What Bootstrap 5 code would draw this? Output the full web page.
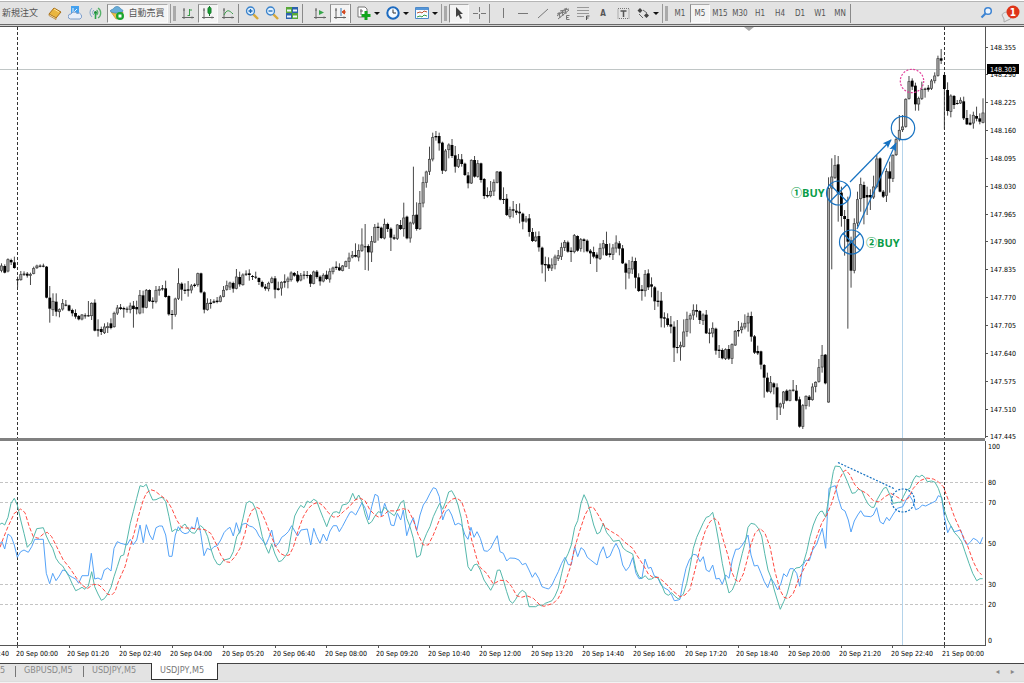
<!DOCTYPE html>
<html lang="ja">
<head>
<meta charset="utf-8">
<meta name="viewport" content="width=device-width, initial-scale=1">
<title>USDJPY,M5</title>
<link href="https://cdn.jsdelivr.net/npm/bootstrap@5.3.0/dist/css/bootstrap.min.css" rel="stylesheet">
<style>
:root{--ui:"DejaVu Sans Condensed","Noto Sans CJK JP",sans-serif}
body{font-family:var(--ui);font-size:8px;background:#fff;color:#333;line-height:1}
.toolbar{background:#e3e3e3;border-top:1px solid #b5b5b5;height:23px;margin-top:1px}
.toolbar-edge{height:3px;background:#d4d4d4;border-top:1px solid #6a6a6a;border-bottom:1px solid #555}
.tool{flex:none;width:20px;height:19px;padding:0;border:0;background:none;color:#555;font-size:8px;display:flex;align-items:center;justify-content:center}
.tool svg{width:14px;height:14px;flex:none}
.tool.active{background:#f4f4f4;border:1px solid #fafafa;border-left-color:#8c8c8c;border-top-color:#aaa}
.tool-order{width:45px;font-size:9px;justify-content:flex-start;padding-left:2px}
.tool-auto{width:61px;font-size:9px;margin:0 2px 0 2px;gap:4px}
.tool-menu{width:29px;gap:3px}
.tool-menu::after{content:"";border:3px solid transparent;border-top-color:#111;border-bottom:0}
.tool .bubble{width:20px;height:20px}
.period{padding-top:2px}
.rule-v{flex:none;width:4px;height:19px;border-left:1px solid #8a8a8a}
.grip{flex:none;width:8px;height:19px;border-left:1px solid #999}
.grip::after{content:"";display:block;width:3px;height:15px;margin:2px 0 0 2px;background:#aaa}
.chart{display:block;width:100%;height:auto;background:#fff}
.chart text{font-family:var(--ui);font-size:7px;fill:#000}
.chart .price-now{fill:#fff}
.chart .note{font-family:"Open Sans","Noto Sans CJK JP",sans-serif;font-weight:700;font-size:11px;fill:#0a9d48}
.chart .ring{font-family:"Noto Sans CJK JP",sans-serif;font-weight:700;font-size:11px}
.sheetbar{background:#e3e3e3;border-top:1px solid #444;height:18px}
.sheetbar .nav-link{font-size:9px;line-height:11px;color:#8a8a8a;padding:1px 0 4px 8px;height:15px;min-width:67px}
.sheetbar .bar-mark{width:1px;height:11px;background:#777;margin-top:2px}
.sheetbar .nav-link.active{background:#fff;border:1px solid #333;border-top:0;color:#777;margin-top:-1px;height:17px;padding-top:2px}
.sheetbar .nav-link.first-tab{padding-left:0;min-width:15px}
.scroller{border:0;background:none;color:#888;font-size:8px;padding:0;width:15px;height:15px}
.statusbar{background:#f3f3f3;border-top:1px solid #ddd;height:2px}
</style>
</head>
<body>
<header>
<div class="toolbar d-flex align-items-center overflow-hidden" role="toolbar">
  <button class="tool tool-order">新規注文</button>
  <button class="tool" aria-label="履歴"><svg viewBox="0 0 14 14"><path d="M1 8 6 2l7 4-5 6z" fill="#e9b640" stroke="#a86f18"/><path d="m1 8 7 4v1.500L1 9.500z" fill="#fff3c8" stroke="#a86f18" stroke-width=".7"/><path d="m6 3 5 3" stroke="#ffe597"/></svg></button>
  <button class="tool" aria-label="クラウド"><svg viewBox="0 0 14 14"><rect x="3" y="0" width="8" height="8" fill="#43a0ee"/><path d="M5 2v5l4-4" stroke="#e8f5ff" fill="none"/><path d="M2.500 13a2.500 2.500 0 0 1 .5-5 3.500 3.500 0 0 1 6-.500A3 3 0 0 1 12 13z" fill="#e8eff9" stroke="#7d9cc8"/></svg></button>
  <button class="tool" aria-label="シグナル"><svg viewBox="0 0 14 14" fill="none"><path d="M4 2a6 6 0 0 0 0 9M6 4a3 3 0 0 0 0 5" stroke="#86a7c9"/><path d="M10 2a6 6 0 0 1 0 10M8.500 4a3 3 0 0 1 0 5" stroke="#55b169" stroke-width="1.300"/><circle cx="7.500" cy="6.500" r="1.500" fill="#198b35"/><path d="M7.500 7v6" stroke="#2ba34a" stroke-width="1.600"/></svg></button>
  <button class="tool tool-auto active"><svg viewBox="0 0 14 14"><path d="m1 6 6 2 6-2-2 6-5 1z" fill="#edc04a" stroke="#b98a20" stroke-width=".6"/><path d="M0 5c1-2 3-1 4-3s5-2 6 0 3 1 3 3-11 3-13 0z" fill="#69add8" stroke="#3b7fb0" stroke-width=".6"/><circle cx="10" cy="10" r="4" fill="#19a52e"/><path d="M8.500 8.500h3v3h-3z" fill="#fff"/></svg>自動売買</button>
  <span class="grip"></span>
  <button class="tool" aria-label="バーチャート"><svg viewBox="0 0 14 14" fill="none" stroke="#666"><path d="M3 2v11M1 11.500h12M2 4h2M11 10.500v2"/><path d="M8.500 3v7M8.500 4H11M6.500 9.500h2" stroke="#3c9c4a"/></svg></button>
  <button class="tool active" aria-label="ローソク足"><svg viewBox="0 0 14 14" fill="none" stroke="#666"><path d="M3 2v11M1 11.500h12M2 4h2M11 10.500v2"/><path d="M8.500 0v10" stroke="#14782a"/><rect x="7" y="1.500" width="3" height="6" rx="1" fill="#16a332" stroke="#14782a"/></svg></button>
  <button class="tool" aria-label="ラインチャート"><svg viewBox="0 0 14 14" fill="none" stroke="#666"><path d="M3 2v11M1 11.500h12M2 4h2M11 10.500v2"/><path d="M3 9c3-6 5-5 9-1" stroke="#3c9c4a"/></svg></button>
  <span class="rule-v"></span>
  <button class="tool" aria-label="拡大"><svg viewBox="0 0 14 14"><path d="m8 8 5 5" stroke="#d7a93a" stroke-width="2.400"/><circle cx="5.500" cy="5" r="4" fill="#dff0ff" stroke="#3b83cb" stroke-width="1.300"/><path d="M3.500 5h4M5.500 3v4" stroke="#226cb7" stroke-width="1.300"/></svg></button>
  <button class="tool" aria-label="縮小"><svg viewBox="0 0 14 14"><path d="m8 8 5 5" stroke="#d7a93a" stroke-width="2.400"/><circle cx="5.500" cy="5" r="4" fill="#dff0ff" stroke="#3b83cb" stroke-width="1.300"/><path d="M3.500 5h4" stroke="#226cb7" stroke-width="1.300"/></svg></button>
  <button class="tool" aria-label="整列"><svg viewBox="0 0 14 14"><path d="M1 1h6v6H1zM7 7h6v6H7z" fill="#58a839"/><path d="M7 1h6v6H7zM1 7h6v6H1z" fill="#2c62ad"/><path d="M2 3.500h4v2H2zM8 3.500h4v2H8zM2 9.500h4v2H2zM8 9.500h4v2H8z" fill="#edf5ff"/></svg></button>
  <span class="rule-v me-1"></span>
  <button class="tool" aria-label="自動スクロール"><svg viewBox="0 0 14 14" fill="none" stroke="#666"><path d="M3 2v11M1 11.500h12M2 4h2M11 10.500v2"/><path d="m6 4 5 2.500L6 9z" fill="#36a64b" stroke="none"/></svg></button>
  <button class="tool active" aria-label="チャートシフト"><svg viewBox="0 0 14 14" fill="none" stroke="#666"><path d="M3 2v11M1 11.500h12M2 4h2M11 10.500v2"/><path d="M8 2v8" stroke="#3878b0"/><path d="M13 6h-3m1.500-2-2.500 2 2.500 2z" stroke="#d34a22" fill="#d34a22"/></svg></button>
  <span class="rule-v"></span>
  <button class="tool tool-menu" aria-label="インディケータ"><svg viewBox="0 0 14 14"><path d="M1 1h7l2 2v8H1z" fill="#fff" stroke="#777"/><path d="M4 3v6M3 5h3" stroke="#666"/><path d="M9 5v9M4.500 9.500h9" stroke="#11a51d" stroke-width="3"/></svg></button>
  <button class="tool tool-menu" aria-label="時間足"><svg viewBox="0 0 14 14"><circle cx="7" cy="7" r="5.700" fill="#f4faff" stroke="#1d6bc0" stroke-width="2"/><path d="M7 3.500V7h3" fill="none" stroke="#333"/></svg></button>
  <button class="tool tool-menu" aria-label="定型チャート"><svg viewBox="0 0 14 14"><path d="M.5 1.500h13v11H.5z" fill="#f8fbff" stroke="#4d89c8"/><path d="M1 2h12v2H1z" fill="#5596d8"/><path d="m2 7 3-1 2 1 2-2 3 1" fill="none" stroke="#c05632"/><path d="m2 11 3-1 2 1 2-2 3 1" fill="none" stroke="#36a04a"/></svg></button>
  <span class="grip"></span>
  <button class="tool active" aria-label="カーソル"><svg viewBox="0 0 14 14"><path d="M4 1v10l2.500-2 2 4 1.500-1-2-4h3z" fill="#444"/></svg></button>
  <button class="tool" aria-label="クロスヘア"><svg viewBox="0 0 14 14" stroke="#777"><path d="M7.500 1v5M7.500 8v5M1 7.500h5M9 7.500h5"/></svg></button>
  <span class="rule-v"></span>
  <button class="tool" aria-label="垂直線"><svg viewBox="0 0 14 14" stroke="#777"><path d="M7.500 2v10"/></svg></button>
  <button class="tool" aria-label="水平線"><svg viewBox="0 0 14 14" stroke="#777"><path d="M2 7.500h10"/></svg></button>
  <button class="tool" aria-label="トレンドライン"><svg viewBox="0 0 14 14" stroke="#777"><path d="M2 12 12 3"/></svg></button>
  <button class="tool" aria-label="チャネル"><svg viewBox="0 0 14 14" stroke="#777" fill="none"><path d="m1 10 10-8M2 13 13 4M3 6l1 6M6 4l1 6M9 2l1 6M1 8l8-2M4 5l9-2"/><path d="M13.500 9.500h-3v4h3m-3-2h2"/></svg></button>
  <button class="tool" aria-label="フィボナッチ"><svg viewBox="0 0 14 14" stroke="#999" fill="none"><path d="M1 1.500h12M1 4.500h12M1 7.500h12M1 10.500h7"/><path d="M10.500 14v-4h3m-3 2h2" stroke="#555"/></svg></button>
  <button class="tool period fw-bold" aria-label="テキスト">A</button>
  <button class="tool" aria-label="テキストラベル"><svg viewBox="0 0 14 14" fill="none"><path d="M2 2.500h11v10H2z" stroke="#777" stroke-dasharray="1 1"/><path d="M4.500 5h6M7.500 5v6" stroke="#555" stroke-width="1.500"/></svg></button>
  <button class="tool tool-menu" aria-label="矢印"><svg viewBox="0 0 14 14"><path d="m4 2 2.500 2.500L4 7 1.500 4.500zM10.500 7l2.500 2.500-2.500 2.500L8 9.500z" fill="#444"/><path d="m3 8 4 4m0-8 4 3" stroke="#666"/></svg></button>
  <span class="grip"></span>
  <button class="tool period">M1</button><button class="tool period active">M5</button><button class="tool period">M15</button><button class="tool period">M30</button><button class="tool period">H1</button><button class="tool period">H4</button><button class="tool period">D1</button><button class="tool period">W1</button><button class="tool period">MN</button>
  <span class="rule-v"></span>
  <button class="tool ms-auto" aria-label="検索"><svg viewBox="0 0 14 14" fill="none" stroke="#3d84d3"><circle cx="9" cy="5" r="3.300" fill="#eef6ff" stroke-width="1.500"/><path d="m6.500 7.500-4 4" stroke-width="2.200"/></svg></button>
  <button class="tool ms-1 me-1" aria-label="通知 1 件"><svg class="bubble" viewBox="0 0 20 20"><path d="M2 12a5 4 0 1 1 6 5l-4 2 0-3z" fill="#e6e6e6" stroke="#aaa"/><circle cx="13" cy="9" r="6.500" fill="#df3419"/><text x="13" y="13" text-anchor="middle" font-size="10" font-weight="700" fill="#fff">1</text></svg></button>
</div>
<div class="toolbar-edge"></div>
</header>

<main>
<svg class="chart" viewBox="0 27 1024 636" role="img" aria-label="USDJPY M5">
  <defs><marker id="tip" viewBox="0 0 10 10" refX="9" refY="5" markerWidth="10" markerHeight="9" markerUnits="userSpaceOnUse" orient="auto"><path d="M0 1 10 5 0 9 2 5z" fill="#1672c2"/></marker></defs>
  <g id="levels" stroke="#c4c4c4" stroke-dasharray="3 2"></g>
  <path d="M0 69.500h985" stroke="#c0c6c6"/>
  <path d="M744 27h10l-5 4z" fill="#aaa"/>
  <path d="M17.500 27v621M944.500 27v621" stroke="#333" stroke-dasharray="3 2"/>
  <g id="candles"></g>
  <path d="M902.500 140v505" stroke="#b4d3ea"/>
  <g id="lines" fill="none" stroke-linejoin="round"></g>
  <path d="M0 439.500h985" stroke="#808080" stroke-width="3"/>
  <path d="M985.500 27v411M985.500 441v204M0 645.500h986" stroke="#555" fill="none"/>
  <g id="axes" stroke="#555"></g>
  <g id="labels"></g>
  <rect x="987" y="64" width="32" height="10" fill="#000"/><text class="price-now" x="990" y="72">148.303</text>
  <g fill="none" stroke="#1672c2" stroke-width="1.200">
    <circle cx="903" cy="128" r="11.700"/>
    <circle cx="838.500" cy="193" r="12"/><path d="m830 184.500 17 17m0-17-17 17"/>
    <circle cx="851.500" cy="242" r="12"/><path d="m843 233.500 17 17m0-17-17 17"/>
    <path d="M850 182 891 140" marker-end="url(#tip)"/>
    <path d="M857 229 896 143" marker-end="url(#tip)"/>
    <path d="m838 462.500 57 26.500" stroke-dasharray="2 1.500"/>
    <circle cx="903" cy="500.500" r="11.500" stroke-dasharray="2 1.500"/>
    <circle cx="912" cy="81" r="11.700" stroke="#e43d9b" stroke-dasharray="2 1.500"/>
  </g>
  <text class="note" x="791" y="197"><tspan class="ring">①</tspan>BUY</text>
  <text class="note" x="866" y="247"><tspan class="ring">②</tspan>BUY</text>
</svg>
</main>

<footer>
<div class="sheetbar d-flex">
  <ul class="nav flex-nowrap">
    <li class="nav-item"><a class="nav-link first-tab" href="#">5</a></li><li class="bar-mark"></li>
    <li class="nav-item"><a class="nav-link" href="#">GBPUSD,M5</a></li><li class="bar-mark"></li>
    <li class="nav-item"><a class="nav-link" href="#">USDJPY,M5</a></li>
    <li class="nav-item"><a class="nav-link active" aria-current="page" href="#">USDJPY,M5</a></li>
  </ul>
  <div class="ms-auto d-flex me-1"><button class="scroller" aria-label="前">◂</button><button class="scroller" aria-label="次">▸</button></div>
</div>
<div class="statusbar"></div>
</footer>

<script src="https://cdn.jsdelivr.net/npm/bootstrap@5.3.0/dist/js/bootstrap.bundle.min.js"></script>
<script>
// Bars are "high top bottom low" in thirds of a unit below y0; u = rising, d = falling.
const barX = k => 17.6 + 3.218 * k;
const bars = [
{k:-5,y0:230,d:`100 107 122 127 u,103 108 128 130 d,85 88 124 127 u,86 90 97 105 d,80 97 114 116 d,140 148 150 172 d,123 133 150 152 u,124 131 134 138 d,126 131 137 143 d,128 132 137 165 u,110 115 131 133 u,104 107 114 117 u,103 107 110 112 d,101 107 110 112 d,108 110 203 205 d,168 203 236 278 d,190 213 240 258 u,190 215 245 259 d,235 238 246 262 u,207 220 238 242 u,210 224 226 229 d,224 226 242 244 d,236 240 250 259 d,238 249 260 266 d,255 258 268 271 d,252 254 268 271 u,250 256 258 266 d,213 256 258 260 d,217 219 258 270 u,208 218 302 304 d,268 298 302 320 d,290 297 306 315 d,280 290 309 312 u,277 289 294 309 u,265 280 294 298 d,245 249 291 293 u,225 233 250 255 u,222 232 237 240 d,230 234 238 263 d,230 236 238 248 d,218 227 239 250 u,213 227 237 293 d,212 231 238 253 d,180 195 250 253 u,182 196 233 250 d,177 180 233 235 u,178 180 214 216 d,202 212 216 236 d,168 180 215 220 u,168 177 182 197 u,165 175 178 182 d,152 175 201 203 d,196 198 253 257 d,240 252 254 298 d,203 206 254 260 u,115 160 206 210 u,157 161 179 212 d,160 179 183 192 d,153 178 182 200 d,162 167 181 190 u,160 164 168 172 d,128 130 165 170 u,128 130 187 190 d,184 187 239 250 d,205 219 240 242 u,207 218 222 236 d,208 214 218 220 d,201 212 216 220 d,195 200 215 217 u,168 180 200 202 u,152 166 179 182 u,155 158 172 180 u,155 159 176 188 d,117 140 176 178 u,125 141 163 170 d,130 134 165 167 u,121 131 134 138 d,118 130 135 152 d,135 138 141 150 d,125 140 142 147 d,142 144 156 165 d`},
{k:76,y0:120,d:`482 486 500 503 d,492 500 506 512 d,485 489 507 514 u,470 475 488 490 u,468 475 509 535 d,485 505 510 512 d,484 486 505 527 u,463 484 488 503 d,470 476 485 505 u,454 458 480 485 u,456 459 467 470 d,453 464 484 488 d,459 466 481 484 u,453 464 467 478 d,453 465 468 475 d,462 465 491 501 d,452 455 491 493 u,450 455 471 476 d,466 470 484 497 d,460 465 484 487 u,452 464 477 480 d,445 454 478 488 u,440 443 456 463 u,424 440 444 450 d,430 442 451 453 d,435 437 452 454 u,422 424 440 442 u,398 413 425 447 u,393 405 412 415 u,370 405 410 412 d,373 391 412 424 u,325 374 392 396 u,312 379 382 450 d,373 378 397 452 d,348 364 397 426 u,312 321 367 369 u,308 320 324 362 d,320 323 354 357 d,296 312 355 358 u,308 312 327 336 d,322 326 353 393 d,344 352 356 360 d,312 314 356 360 u,300 315 327 330 d,248 293 327 350 u,287 290 355 358 d,305 308 355 368 u,140 285 310 314 u,247 284 327 332 d,213 249 327 330 u,170 187 250 262 u,152 155 188 203 u,80 117 155 165 u,38 52 118 124 u,33 48 52 62 d,38 48 70 92 d,65 68 152 162 d,87 92 152 155 u,70 74 90 115 u,57 75 108 114 d,78 106 140 158 d,102 117 140 144 u,102 118 132 140 d,128 131 165 168 d,156 166 190 205 d,118 120 190 192 u,108 120 170 173 d,120 130 170 173 u,128 130 180 188 d,174 177 228 237 d,202 225 229 233 d,183 213 228 232 u,178 186 214 228 u,153 155 188 190 u,153 155 239 241 d`},
{k:151,y0:160,d:`82 117 120 132 d,102 116 165 168 d,140 148 170 176 u,123 148 152 173 d,132 152 158 165 d,130 155 160 190 d,158 161 185 208 d,168 176 184 188 u,162 175 216 230 d,204 216 243 246 d,215 230 243 246 u,214 228 262 275 d,260 263 314 340 d,290 312 316 365 d,292 313 325 333 d,295 314 325 333 u,284 290 315 328 u,270 286 296 303 u,248 262 290 300 u,240 246 263 273 u,242 247 275 278 d,262 272 276 306 d,222 226 276 280 u,226 228 272 275 d,234 238 266 275 u,235 238 243 277 d,238 242 274 277 d,267 272 280 312 d,260 276 290 295 d,277 284 295 336 d,250 264 296 300 u,240 250 265 286 u,215 252 286 288 d,250 280 285 292 d,252 263 284 300 u,226 248 265 278 u,243 250 266 286 d,255 265 310 312 d,308 311 338 388 d,300 325 340 356 u,290 304 328 342 u,293 303 353 385 d,340 352 393 396 d,375 388 393 422 d,330 342 393 410 u,328 340 382 390 d,352 373 380 412 d,378 382 424 450 d,392 422 426 440 d,396 422 475 502 d,457 472 476 503 d,460 475 495 500 d,468 493 500 520 d,484 500 563 606 d,480 561 564 580 d,545 555 562 602 u,478 515 560 562 u,455 477 515 530 u,460 466 478 520 u,433 450 466 480 u,433 450 455 472 d,450 453 480 492 d,460 464 482 495 u,450 464 520 522 d,505 518 521 550 d,487 504 520 532 u,503 506 572 584 d,555 569 573 594 d,565 570 595 598 d,565 568 596 600 u,555 567 596 600 d,550 553 596 612 u,510 513 556 558 u,483 510 514 530 d,488 500 510 520 u,463 489 502 508 u,458 468 490 515 u,455 468 530 545 d,525 529 578 582 d,557 573 580 585 d,572 574 614 628 d`},
{k:232,y0:240,d:`372 375 413 473 d,398 413 455 458 d,408 427 455 460 u,427 430 442 463 d,430 442 502 540 d,488 491 502 525 u,453 455 491 506 u,448 452 482 484 d,448 451 482 484 u,420 449 452 455 d,435 452 482 484 d,470 478 560 563 d,492 496 560 567 u,466 468 498 508 u,465 470 480 500 d,430 440 480 482 u,424 426 440 457 u,357 382 425 428 u,315 345 382 398 u,342 344 430 433 d`},
{k:252,y0:30,d:`442 475 1117 1118 u,385 440 475 718 u,375 405 443 447 u,378 403 490 575 d,470 488 558 590 d,540 558 567 677 d,500 567 635 896 d,620 632 722 773 d,565 580 722 730 u,485 508 580 590 u,443 463 507 545 u,455 465 504 583 d,470 495 502 555 d,478 495 502 540 d,437 470 502 507 u,375 386 470 475 u,382 385 485 487 d,480 485 500 504 d,415 423 497 516 u,395 424 446 488 d,373 375 446 456 u,322 328 375 378 u,255 300 328 334 u,255 290 300 306 u,205 207 290 293 u,138 154 206 209 u,145 152 170 180 d,158 167 223 242 d,200 205 223 242 u,155 178 206 210 u,173 176 179 203 d,165 173 179 185 d,147 152 176 180 u,127 137 153 160 u,77 85 137 140 u,57 85 92 102 d,132 135 177 298 d,157 180 243 257 d,193 197 245 262 u,195 198 225 237 d,210 219 222 224 d,202 210 220 222 u,200 214 265 270 d,240 264 283 285 d,253 278 284 286 d,245 255 280 296 u,230 258 266 274 d,250 265 275 283 d,205 248 278 280 u`}];
let out = '';
for (const s of bars) s.d.split(',').forEach((row, i) => {
  const [h, t, b, l, dir] = row.split(' ');
  const x = barX(s.k + i), Y = v => s.y0 + v / 3;
  out += `<path d="M${x} ${Y(h)}V${Y(l)}" stroke="#333" stroke-width=".9"/>`;
  const hgt = Math.max(1, (b - t) / 3);
  out += dir === 'd'
    ? `<rect x="${x - 1.4}" y="${Y(t)}" width="2.8" height="${hgt}" fill="#000"/>`
    : `<rect x="${x - 1.1}" y="${Y(t) + .3}" width="2.2" height="${Math.max(.6, hgt - .6)}" fill="#aaa" stroke="#444" stroke-width=".75"/>`;
});
document.getElementById('candles').innerHTML = out;

// Oscillator lines: three stretches, each with its own origin, in thirds of a unit.
const origin = [[0, 430], [340, 470], [680, 440]];
const series = [
{c:'#55a3f8',p:[`0,340 6,335 14,357 24,312 34,320 43,345 52,382 62,365 72,360 85,367 95,350 104,328 130,328 139,430 149,461 158,430 168,452 178,438 188,420 197,422 207,436 217,442 227,447 236,460 246,437 265,437 274,370 284,447 294,444 304,449 313,420 323,414 333,423 342,355 352,335 362,340 371,342 381,345 391,328 400,344 410,330 420,285 430,338 439,284 449,315 458,330 468,293 478,288 487,288 497,315 507,379 516,379 526,315 535,290 545,306 555,311 565,308 575,290 584,298 592,262 602,310 612,377 622,355 632,360 642,350 652,347 662,330 672,308 681,298 690,292 700,318 709,278 719,310 727,283 738,280 748,288 758,291 768,300 777,318 787,330 797,345 806,325 815,300 825,350 836,340 845,322 855,315 865,305 875,287 884,303 893,318 903,300 922,297 932,345 941,295 950,320 960,340 970,312 980,333 990,303 1000,287 1010,287 1018,305 1027,290 1040,265`,`30,127 36,125 47,135 56,118 66,98 76,115 86,150 95,110 105,73 114,78 124,138 134,100 143,125 153,165 162,167 172,130 182,150 190,120 200,197 210,165 220,143 230,182 240,135 250,105 260,90 270,70 280,53 288,56 298,80 308,150 317,125 326,118 335,135 345,165 355,160 365,165 375,195 384,208 393,172 402,202 411,185 421,205 432,242 442,244 452,235 462,215 472,197 480,245 490,250 500,273 509,264 525,265 537,270 547,284 557,280 567,300 577,322 586,308 596,325 606,350 616,354 626,357 636,345 645,325 655,305 665,280 675,262 685,284 694,284 704,230 713,260 723,233 732,240 742,262 752,270 771,285 780,250 790,230 800,264 810,258 820,235 828,220 838,240 848,285 858,302 868,290 878,263 888,310 897,326 906,325 915,267 925,295 933,292 943,318 953,322 963,345 975,355 985,360 995,375 1003,392 1015,390`,`0,478 8,430 18,385 28,360 40,343 50,345 60,365 70,350 79,390 88,395 98,375 108,417 118,415 127,433 137,405 147,415 157,360 167,328 177,327 187,315 195,302 204,285 213,345 223,378 233,376 243,400 253,425 263,443 273,415 283,430 293,450 303,430 311,401 320,410 330,386 340,386 350,400 359,439 369,375 378,360 388,362 398,330 410,312 418,290 427,265 437,325 442,230 447,145 457,140 466,137 475,175 485,207 495,213 505,240 513,276 523,243 533,225 542,212 552,228 572,230 580,225 590,203 600,245 610,252 620,232 628,242 640,222 652,205 668,200 678,180 688,165 698,182 707,209 717,205 727,195 737,198 747,193 757,188 767,183 775,167 785,172 793,230 803,278 813,258 823,275 842,270 852,300 862,315 872,305 880,295 890,300 900,312 908,292`]},
{c:'#55b8ab',p:[`0,283 6,279 14,285 24,262 33,220 43,205 52,225 62,270 72,310 82,352 95,337 110,296 130,293 139,318 149,340 158,355 168,385 178,400 188,408 207,440 217,462 227,482 236,478 246,472 255,478 265,468 275,425 284,470 294,492 304,511 313,506 323,492 333,472 342,440 352,410 362,378 371,375 381,330 391,280 400,245 410,205 420,167 430,170 439,163 449,190 458,210 468,209 478,204 487,202 497,215 507,260 516,305 526,298 536,302 545,290 555,282 565,297 575,308 584,310 594,295 602,287 613,297 623,320 632,355 642,385 652,402 660,405 671,390 681,388 690,385 700,365 710,320 719,305 729,265 739,220 748,214 758,219 768,240 777,275 787,320 797,350 806,370 815,342 825,372 836,395 845,392 855,380 865,365 875,305 884,258 893,240 902,226 912,233 922,213 930,218 941,208 950,213 960,240 970,265 980,290 990,263 1000,247 1010,245 1018,250 1027,225 1040,222`,`28,95 38,70 47,90 56,75 66,95 76,135 86,162 95,155 105,138 115,125 124,128 134,112 143,122 153,130 163,137 172,120 182,98 191,91 200,145 210,170 220,205 230,262 241,256 250,215 260,190 270,170 280,140 290,118 299,100 308,118 317,95 326,66 335,62 345,80 354,105 364,145 374,220 384,290 393,303 402,285 411,282 421,300 432,330 442,345 452,361 462,342 472,301 480,300 490,330 500,365 509,392 518,400 527,388 537,370 547,361 557,368 567,410 587,410 597,404 606,408 616,400 626,396 636,392 645,378 655,355 665,310 675,270 685,250 694,225 704,172 713,152 723,100 732,74 742,95 752,130 761,165 771,192 780,187 790,160 800,188 810,200 820,214 838,211 850,235 860,243 878,252 888,300 897,320 906,325 916,317 925,328 935,327 945,320 955,325 965,345 975,370 985,376 995,368 1004,378 1015,387`,`0,472 10,462 20,430 30,380 40,325 50,292 60,270 70,248 79,232 88,229 98,217 108,260 118,315 127,370 137,420 147,459 157,450 167,425 177,380 187,340 195,310 204,262 213,250 225,253 235,265 245,288 254,340 264,390 274,415 283,450 292,480 301,508 311,485 321,462 331,425 340,392 348,384 360,382 370,370 380,335 390,290 400,255 410,230 420,215 427,213 437,232 442,200 452,140 460,95 466,78 480,80 490,97 500,120 510,145 516,160 526,158 535,147 545,152 555,175 565,193 575,202 582,202 592,178 602,160 611,145 619,142 630,165 640,190 655,187 662,187 670,170 680,150 690,145 700,120 708,107 718,111 726,105 735,113 742,125 755,123 765,127 775,145 785,175 793,210 803,240 813,258 823,277 835,290 845,305 855,335 867,370 878,400 890,422 900,416 908,416`]},
{c:'#ff4b43',dash:'4 2',p:[`0,352 10,325 24,290 43,250 62,237 75,248 88,290 100,320 115,325 130,312 142,307 155,320 170,350 190,390 210,415 230,445 246,465 262,476 280,463 297,465 312,480 323,493 335,495 345,485 355,455 375,410 391,350 405,300 415,260 430,210 439,190 452,179 465,183 480,195 500,210 515,235 530,270 545,293 575,295 615,299 632,310 650,345 662,375 675,395 690,397 705,380 720,355 735,310 745,265 757,240 770,232 780,237 795,270 810,310 825,345 840,370 855,377 868,375 880,352 895,300 910,260 925,235 940,222 955,217 970,228 985,248 1000,261 1015,260 1030,245`,`30,108 45,90 60,84 75,92 90,120 105,135 117,142 130,137 145,122 165,123 190,116 205,120 220,150 235,195 250,225 265,225 280,195 300,145 320,105 335,88 350,84 365,95 380,140 395,210 410,265 420,292 440,310 460,342 480,331 500,332 515,350 530,377 545,382 560,377 580,385 600,405 612,409 640,400 655,385 670,355 690,295 705,230 720,180 735,135 748,112 760,112 775,135 795,172 815,185 835,197 855,217 878,235 890,255 910,285 925,312 940,323 955,322 975,338 995,360`,`0,470 15,465 30,448 45,390 60,325 75,275 90,245 103,235 115,245 130,300 145,350 155,395 165,418 177,427 190,402 200,365 212,315 225,280 240,265 255,280 270,320 285,395 300,450 312,472 325,476 340,460 355,420 370,390 390,350 410,290 425,250 440,225 455,190 475,125 490,95 498,90 510,105 525,135 540,150 560,160 580,182 597,186 615,170 632,160 650,170 670,182 685,175 700,145 720,122 740,114 760,117 775,125 790,140 805,180 825,235 845,280 862,315 880,365 895,395 905,404`]}];
document.getElementById('lines').innerHTML = series.map(s => {
  const pts = s.p.flatMap((seg, n) => seg.split(' ').map(q => {
    const [x, y] = q.split(',');
    return (origin[n][0] + x / 3).toFixed(1) + ',' + (origin[n][1] + y / 3).toFixed(1);
  }));
  return `<polyline points="${pts.join(' ')}" stroke="${s.c}" ${s.dash ? `stroke-dasharray="${s.dash}"` : ''}/>`;
}).join('');

// Axis ticks and labels
let ticks = '', labels = '', levels = '';
for (let i = 0; i < 15; i++) {
  const y = 46.5 + i * 27.85;
  ticks += `<path d="M985 ${Math.round(y) + .5}h3"/>`;
  labels += `<text x="990" y="${Math.round(y + 3)}">${(148.355 - i * .065).toFixed(3)}</text>`;
}
[[100,449],[80,485],[70,505],[50,546],[30,587],[20,607],[0,643]].forEach(([v, y]) => {
  labels += `<text x="988" y="${y}">${v}</text>`;
  if (v > 0 && v < 100) levels += `<path d="M0 ${y - 2.5}h985"/>`;
});
for (let i = 0; i < 19; i++) {
  const x = 17.6 + i * 51.49, m = i * 80;
  const hh = String(Math.floor(m / 60) % 24).padStart(2, '0'), mm = String(m % 60).padStart(2, '0');
  ticks += `<path d="M${Math.floor(x) + .5} 645v3"/>`;
  labels += `<text x="${Math.round(x - 2)}" y="656">${m < 1440 ? 20 : 21} Sep ${hh}:${mm}</text>`;
}
labels += '<text x="9" y="656" text-anchor="end">:40</text>';
document.getElementById('levels').innerHTML = levels;
document.getElementById('axes').innerHTML = ticks;
document.getElementById('labels').innerHTML = labels;
</script>
</body>
</html>
